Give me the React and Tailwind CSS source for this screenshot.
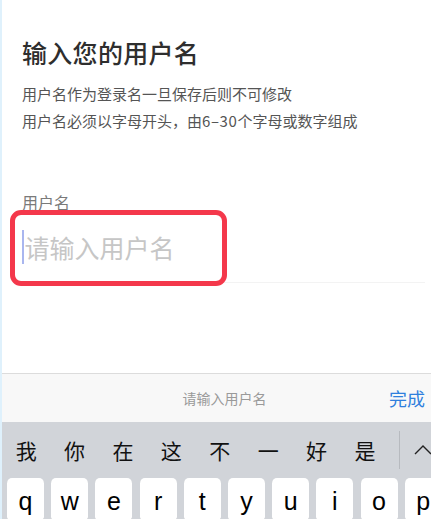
import React from "react";

const cjk = { fontFamily: '"Noto Sans CJK SC", "Noto Sans", sans-serif' };
const latin = { fontFamily: '"Liberation Sans", "Noto Sans CJK SC", sans-serif' };

const candidates = ["我", "你", "在", "这", "不", "一", "好", "是"];
const keys = ["q", "w", "e", "r", "t", "y", "u", "i", "o", "p"];

export default function App() {
  return (
    <div className="w-[431px] h-[519px] overflow-hidden flex bg-white" style={cjk}>
      <div className="w-[2px] shrink-0 bg-[#dff1fc]" />
      <div className="flex-1 flex flex-col min-w-0">
        {/* content */}
        <div className="h-[373px] shrink-0 pl-[20px] pr-[6px] pt-[40px] flex flex-col">
          <div className="text-[25px] leading-[25px] text-[#2e2e2e] font-medium tracking-[0.3px]">输入您的用户名</div>
          <div className="mt-[15px] text-[15px] leading-[27px] text-[#555]">
            <div>用户名作为登录名一旦保存后则不可修改</div>
            <div>
              用户名必须以字母开头，由<span className="tracking-[0.6px]">6–30</span>个字母或数字组成
            </div>
          </div>
          <div className="mt-[58px] text-[16px] leading-[20px] text-[#7a7a7a]">用户名</div>
          <div className="relative h-[71px] border-b border-[#f3f3f3] flex items-center">
            <div className="w-[1.5px] h-[34px] bg-[#a9b6ef] mr-[1px]" />
            <div className="text-[25px] leading-none text-[#c6c6c6]">请输入用户名</div>
            <div className="absolute left-[-12px] top-[-2px] w-[217px] h-[76px] border-[5px] border-[#f4384b] rounded-[11px]" />
          </div>
        </div>
        {/* accessory bar */}
        <div className="h-[49px] shrink-0 border-t border-[#dcdcdc] bg-[#f8f8f8] relative flex items-center justify-center">
          <span className="text-[14px] text-[#9a9a9a] ml-[16px]">请输入用户名</span>
          <span className="absolute right-[6px] text-[18px] text-[#2f7fdd]">完成</span>
        </div>
        {/* keyboard */}
        <div className="flex-1 bg-[#d1d4d9] flex flex-col overflow-hidden">
          <div className="h-[56px] shrink-0 flex items-center">
            {candidates.map((c) => (
              <div key={c} className="w-[48.4px] shrink-0 text-center text-[21px] leading-none text-[#111]">
                {c}
              </div>
            ))}
            <div className="ml-[10px] w-px h-[38px] bg-[#b7babf] shrink-0" />
            <svg className="ml-[14px] shrink-0" width="18" height="12" viewBox="0 0 18 12">
              <polyline points="1,10 9,2 17,10" fill="none" stroke="#222" strokeWidth="1.4" />
            </svg>
          </div>
          <div className="flex gap-[7.2px] pl-[5px]">
            {keys.map((k) => (
              <div
                key={k}
                className="w-[37px] h-[44px] shrink-0 bg-white rounded-[5px] flex items-center justify-center text-[25px] text-black shadow-[0_1px_0_#8a8d92]"
                style={latin}
              >
                <span className="mt-[4px]">{k}</span>
              </div>
            ))}
          </div>
        </div>
      </div>
    </div>
  );
}
